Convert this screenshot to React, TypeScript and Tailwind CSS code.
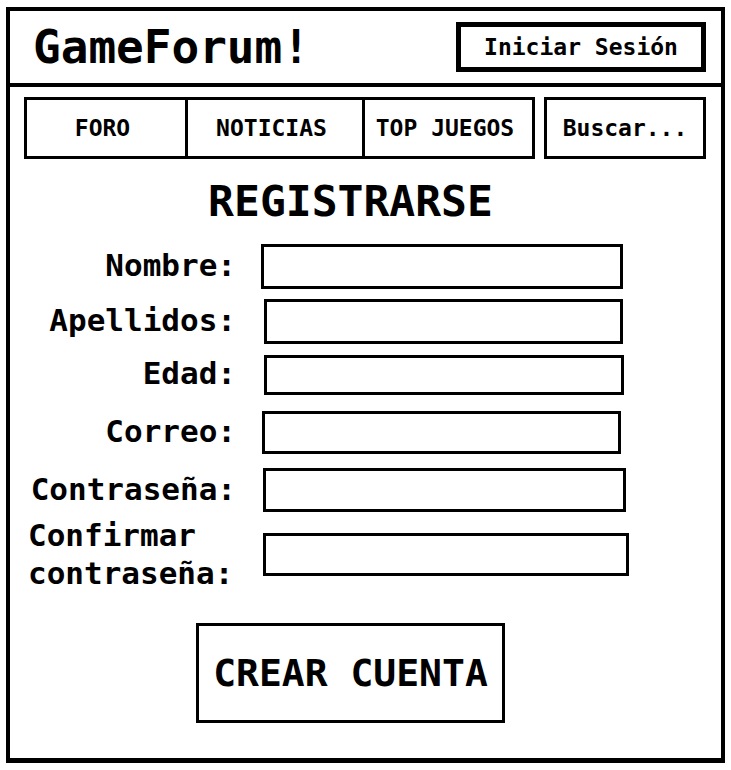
const navItems = [
  { label: "FORO", width: "w-[158px]", divider: false },
  { label: "NOTICIAS", width: "w-[177px]", divider: true },
  { label: "TOP JUEGOS", width: "w-[170px]", divider: true },
];

const fields = [
  { label: ["Nombre:"], box: "mt-[21px]", input: "ml-[25px] w-[362px] h-[45px]" },
  { label: ["Apellidos:"], box: "mt-[10px]", input: "ml-[28px] w-[359px] h-[45px]" },
  { label: ["Edad:"], box: "mt-[10px]", input: "ml-[28px] w-[360px] h-[40px]" },
  { label: ["Correo:"], box: "mt-[16px]", input: "ml-[26px] w-[359px] h-[43px]" },
  { label: ["Contraseña:"], box: "mt-[14px]", input: "ml-[27px] w-[363px] h-[44px]" },
  {
    label: ["Confirmar", "contraseña:"],
    box: "mt-[4px]",
    input: "ml-[27px] w-[366px] h-[43px]",
  },
];

export default function App() {
  return (
    <div className="min-h-[770px] bg-white pt-[7px] pl-[6px] text-black [font-family:'DejaVu_Sans_Mono',monospace] font-bold">
      <div className="flex h-[756px] w-[719px] flex-col border-4 border-b-[5px] border-black">
        <header className="flex h-[76px] items-center justify-between border-b-4 border-black pl-[23px] pr-[15px]">
          <h1 className="text-[46px] leading-none">GameForum!</h1>
          <button className="flex h-[50px] w-[250px] items-center justify-center border-[5px] border-black text-[23px] leading-none">
            Iniciar Sesión
          </button>
        </header>

        <nav className="mt-[10px] flex pl-[14px]">
          <div className="flex h-[62px] border-[3px] border-black">
            {navItems.map((item) => (
              <div
                key={item.label}
                className={`flex items-center justify-center pr-[7px] text-[23px] leading-none ${item.width} ${
                  item.divider ? "border-l-[3px] border-black" : ""
                }`}
              >
                {item.label}
              </div>
            ))}
          </div>
          <div className="ml-[9px] flex h-[62px] w-[162px] items-center justify-center border-[3px] border-black text-[23px] leading-none">
            Buscar...
          </div>
        </nav>

        <h2 className="mt-[21px] pr-[30px] text-center text-[43px] leading-none">
          REGISTRARSE
        </h2>

        <form className="flex flex-col">
          {fields.map((field) => (
            <div key={field.label.join(" ")} className={`flex items-center ${field.box}`}>
              <label
                className={`w-[226px] text-[31px] leading-[38px] ${
                  field.label.length > 1 ? "pl-[18px] text-left" : "pb-[3px] text-right"
                }`}
              >
                {field.label.map((line) => (
                  <span key={line} className="block">
                    {line}
                  </span>
                ))}
              </label>
              <div className={`border-[3px] border-black ${field.input}`} />
            </div>
          ))}
        </form>

        <div className="mt-[31px] flex justify-center pr-[30px]">
          <button className="flex h-[100px] w-[309px] items-center justify-center border-[3px] border-black text-[38px] leading-none">
            CREAR CUENTA
          </button>
        </div>
      </div>
    </div>
  );
}
